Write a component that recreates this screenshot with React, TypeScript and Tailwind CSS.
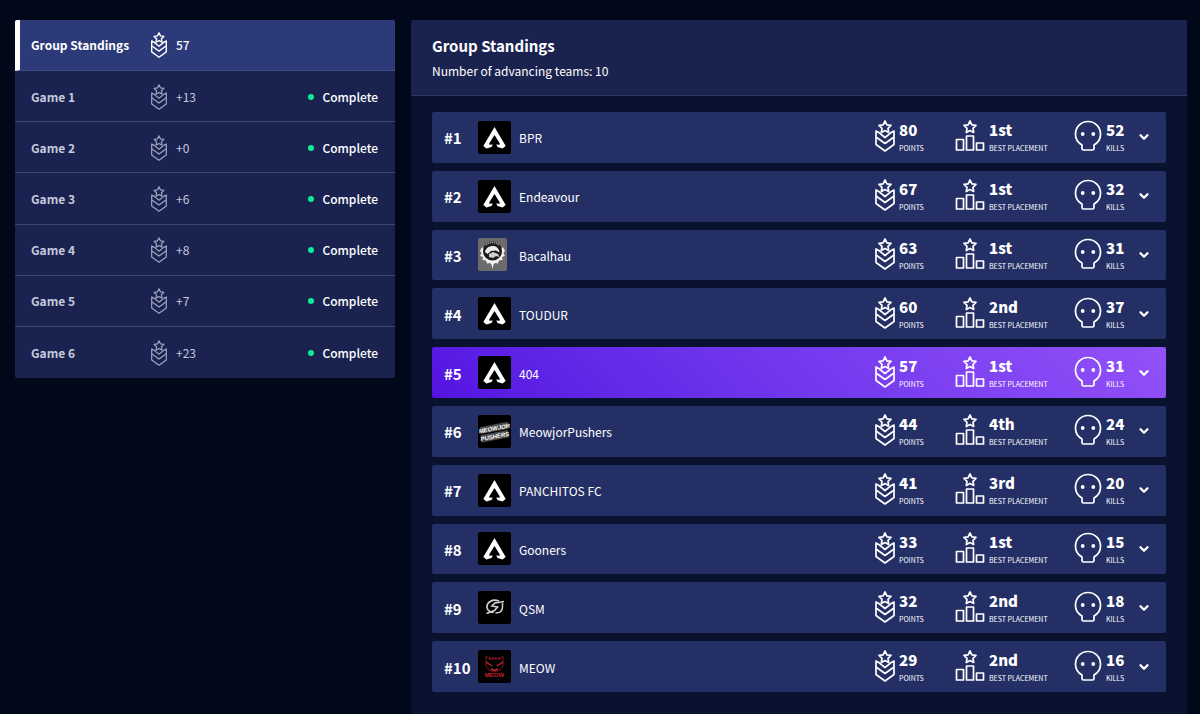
import React from "react";
import clsx from "clsx";
import { ChevronDown } from "lucide-react";

const games = [
  { name: "Game 1", points: "+13" },
  { name: "Game 2", points: "+0" },
  { name: "Game 3", points: "+6" },
  { name: "Game 4", points: "+8" },
  { name: "Game 5", points: "+7" },
  { name: "Game 6", points: "+23" },
];

const teams = [
  { name: "BPR", logo: "apex", points: 80, placement: "1st", kills: 52 },
  { name: "Endeavour", logo: "apex", points: 67, placement: "1st", kills: 32 },
  { name: "Bacalhau", logo: "crest", points: 63, placement: "1st", kills: 31 },
  { name: "TOUDUR", logo: "apex", points: 60, placement: "2nd", kills: 37 },
  { name: "404", logo: "apex", points: 57, placement: "1st", kills: 31, mine: true },
  { name: "MeowjorPushers", logo: "pushers", points: 44, placement: "4th", kills: 24 },
  { name: "PANCHITOS FC", logo: "apex", points: 41, placement: "3rd", kills: 20 },
  { name: "Gooners", logo: "apex", points: 33, placement: "1st", kills: 15 },
  { name: "QSM", logo: "qsm", points: 32, placement: "2nd", kills: 18 },
  { name: "MEOW", logo: "meow", points: 29, placement: "2nd", kills: 16 },
];

const STAR = "M10 1l1.900 3.800 4.100.6-3 2.900.7 4.200-3.700-2-3.700 2 .7-4.200-3-2.900 4.100-.6z";

const RankIcon = ({ className }: { className: string }) => (
  <svg viewBox="0 0 20 32" fill="none" stroke="currentColor" strokeLinejoin="round" className={className}>
    <path d={STAR} />
    <path d="M4.200 12.800L1 11v6l9 6.500 9-6.500v-6l-3.200 1.800L10 17.500z" />
    <path d="M1 17v7.500L10 31l9-6.500V17" />
  </svg>
);

const PodiumIcon = () => (
  <svg viewBox="0 0 30 32" fill="none" stroke="currentColor" strokeWidth="1.700" strokeLinejoin="round" className="h-8 w-[30px]">
    <path d={STAR} transform="translate(5 0)" />
    <rect x="1.500" y="19.500" width="7" height="10.500" />
    <rect x="11.500" y="16" width="7" height="14" />
    <rect x="21.500" y="23" width="7" height="7" />
  </svg>
);

const SkullIcon = () => (
  <svg viewBox="0 0 28 32" fill="none" stroke="currentColor" strokeWidth="1.700" strokeLinejoin="round" className="h-8 w-7">
    <path d="M8 25v3.500q0 1.500 1.500 1.500h9q1.500 0 1.500-1.500V25c3.700-2.100 6.500-6 6.500-10.500C26.500 7 21 1.500 14 1.500S1.500 7 1.500 14.500C1.500 19 4.300 22.900 8 25z" />
    <circle cx="8.700" cy="14" r="1.900" fill="currentColor" stroke="none" />
    <circle cx="19.300" cy="14" r="1.900" fill="currentColor" stroke="none" />
  </svg>
);

const TeamLogo = ({ kind }: { kind: string }) => {
  if (kind === "crest") {
    return (
      <svg viewBox="0 0 29 33" className="h-[33px] w-[29px] rounded-xs">
        <rect width="29" height="33" fill="#6b6b6b" />
        <path d="M4 9l-2 4 1.500 2-1.500 3 3 1-.5 3 3.500.5 1 3 3-.5 1.500 1.500L14.500 31l1-4.500L17 25l3 .5 1-3 3.500-.5-.5-3 3-1-1.500-3L27 13l-2-4-3 3H7z" fill="#f0f0f0" />
        <circle cx="14.500" cy="13" r="9.500" fill="#1c1c1c" />
        <path d="M8 7Q14.500 2 21 7" fill="none" stroke="#999" strokeWidth="1.300" strokeDasharray="1.500 .6" />
        <path d="M7 14c1-4 4-6 8-6 3.500 0 6 2.500 6.500 6.500L18 12.500l-5 .5-3.500 3z" fill="#ededed" />
        <path d="M11 16l4-2 5 2 1.500 3-3.500-1-3 2-4-1z" fill="#cfcfcf" />
      </svg>
    );
  }
  return (
    <svg viewBox="0 0 33 33" className="size-[33px] rounded-xs">
      <rect width="33" height="33" fill="#000" />
      {kind === "apex" && (
        <path d="M16.500 6L27.700 25 24.500 27.500l-5-1.500-1.300-2.500 3.300.2.300-1.200-5.300-8.500-5.300 8.500.3 1.200 3.300-.2-1.300 2.500-5 1.500L5.300 25z" fill="#fff" />
      )}
      {kind === "pushers" && (
        <g transform="rotate(-11 16.500 17)" fill="#fff" fontFamily="Liberation Sans" fontWeight="900" fontStyle="italic" textAnchor="middle">
          <path d="M3 9.500h28v7H3zM2 17.500h28v7.500H2z" fill="#4a4a4a" />
          <text x="17" y="15.500" fontSize="6">MEOWJOR</text>
          <text x="16" y="23.500" fontSize="6">PUSHERS</text>
        </g>
      )}
      {kind === "qsm" && (
        <g fill="none" stroke="#d0d0d0" strokeWidth="1.700">
          <path d="M21 10C14 7.500 8.500 11.500 9 16.500c.4 3 3.500 5 6.500 5" />
          <path d="M26 10.500l-9 1.500-3 3 5.500 1-3 3.500-8 3" />
          <path d="M24.500 12v4c0 4-3 6-7 6" strokeWidth="1.500" />
        </g>
      )}
      {kind === "meow" && (
        <g fill="none" stroke="#c5242b">
          <path d="M8 6l3 3h11l3-3v10l-3 4-5.500 2-5.500-2-3-4z" stroke="#7a161c" />
          <path d="M11 8h11" strokeDasharray="2 1" />
          <path d="M8 12l6 4M25 12l-6 4M13 19l3.500 1.500L20 19" strokeWidth="1.500" />
          <text x="16.500" y="27" fontSize="6" fontFamily="Liberation Sans" fontWeight="700" textAnchor="middle" fill="#c5242b" stroke="none">MEOW</text>
        </g>
      )}
    </svg>
  );
};

interface StatProps {
  icon: React.ReactNode;
  value: string | number;
  label: string;
}

const Stat = ({ icon, value, label }: StatProps) => (
  <div className="flex items-center gap-1 pb-0.5">
    {icon}
    <div className="pt-1">
      <p className="text-[15px] leading-4 font-black">{value}</p>
      <p className="mt-1 text-[7px] leading-3 whitespace-nowrap uppercase">{label}</p>
    </div>
  </div>
);

const App: React.FC = () => {
  return (
    <div className="flex min-h-screen items-start gap-4 bg-[#010819] px-[15px] pt-5 pr-[13px] font-['Noto_Sans_CJK_JP',sans-serif] text-xs text-white">
      <nav className="grid min-h-[358px] w-[380px] shrink-0 auto-rows-fr overflow-hidden rounded-xs bg-[#1a234f]">
        <button className="flex items-center border-b border-[#3f4d86] border-l-[5px] border-l-white bg-[#2c3a79] pl-[11px] text-left">
          <span className="w-[119px] font-bold">Group Standings</span>
          <RankIcon className="h-[26px] w-[18px] stroke-[1.7]" />
          <span className="ml-2 font-medium">57</span>
        </button>
        {games.map((game) => (
          <button key={game.name} className="flex items-center border-b border-[#3a4778] pt-px pr-[17px] pl-4 text-left last:border-b-0">
            <span className="w-[119px] font-bold text-[#c6c9dc]">{game.name}</span>
            <RankIcon className="h-[26px] w-[18px] stroke-[1.5] text-[#9ca2c0]" />
            <span className="ml-2 text-[#c6c9dc]">{game.points}</span>
            <span className="mr-2 ml-auto size-[6px] rounded-full bg-[#10eb98]" />
            <span className="font-medium">Complete</span>
          </button>
        ))}
      </nav>

      <main className="min-h-[694px] flex-1 rounded-t-xs bg-[#09122e]">
        <header className="rounded-t-xs border-b border-[#2b3564] bg-[#1a234f] px-[21px] pt-4 pb-[14px]">
          <h1 className="text-[15px] leading-5 font-bold">Group Standings</h1>
          <p className="mt-[5px] leading-5">Number of advancing teams: 10</p>
        </header>

        <ol className="mx-[21px] mt-4 grid min-h-[580px] auto-rows-fr gap-2">
          {teams.map((team, index) => (
            <li
              key={team.name}
              className={clsx(
                "flex items-center rounded-xs pr-[15px] pl-3",
                team.mine ? "bg-linear-45 from-[#5412e2] to-[#9350f8]" : "bg-[#242f66]"
              )}
            >
              <span className="w-[34px] pt-0.5 text-[15px] font-bold">#{index + 1}</span>
              <div className="w-[41px]">
                <TeamLogo kind={team.logo} />
              </div>
              <span className="flex-1 pt-0.5">{team.name}</span>
              <div className="w-20">
                <Stat icon={<RankIcon className="h-8 w-5 stroke-[1.7]" />} value={team.points} label="Points" />
              </div>
              <div className="w-[119px]">
                <Stat icon={<PodiumIcon />} value={team.placement} label="Best placement" />
              </div>
              <div className="w-[63px]">
                <Stat icon={<SkullIcon />} value={team.kills} label="Kills" />
              </div>
              <button aria-label={`Show ${team.name} details`}>
                <ChevronDown size={14} strokeWidth={4} />
              </button>
            </li>
          ))}
        </ol>
      </main>
    </div>
  );
};

export default App;
